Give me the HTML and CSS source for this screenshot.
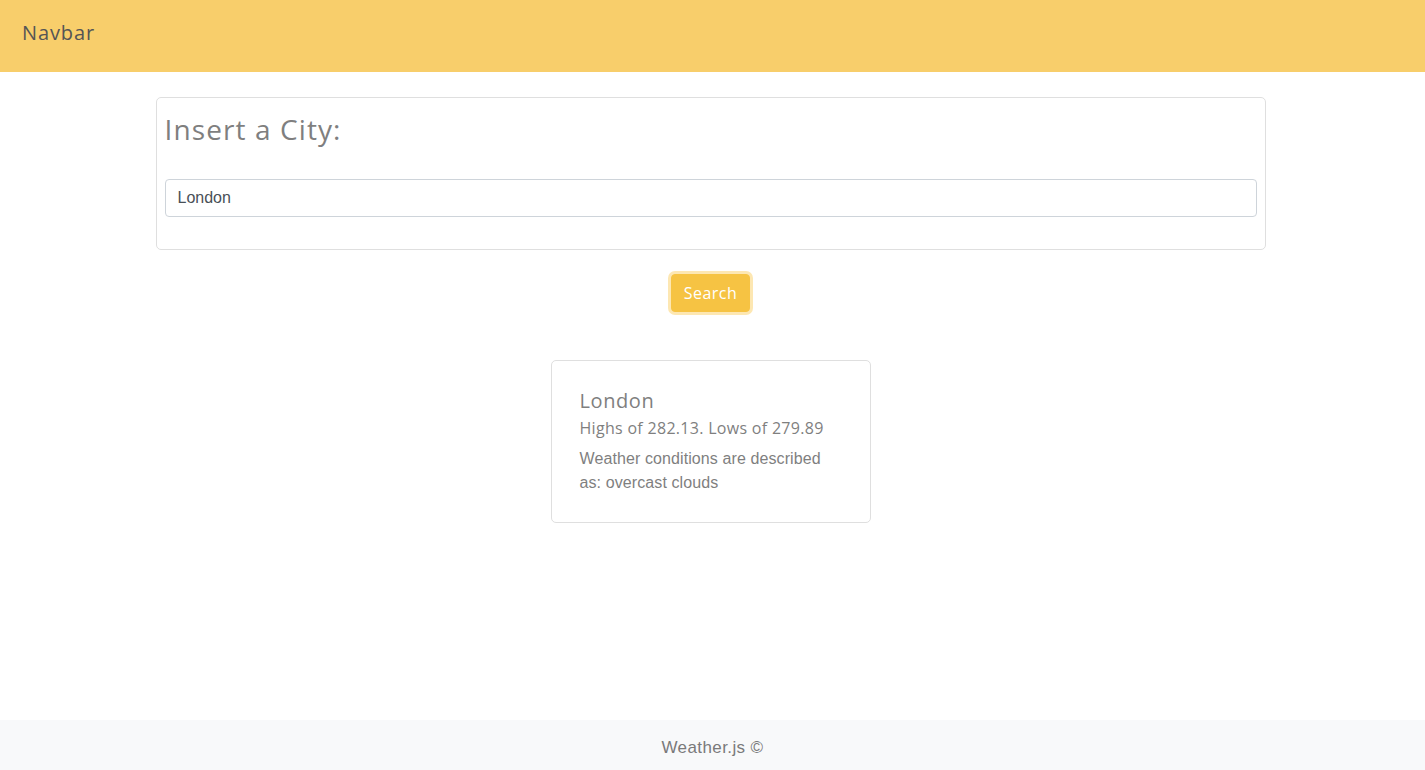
FILE: index.html
```html
<!DOCTYPE html>
<html lang="en">
<head>
<meta charset="utf-8">
<title>Weather.js</title>
<link rel="stylesheet" href="styles.css">
</head>
<body>
<nav class="navbar"><span class="brand">Navbar</span></nav>
<main class="container">
  <section class="search-card">
    <h1 class="search-title">Insert a City:</h1>
    <input class="city-input" type="text" value="London">
  </section>
  <div class="button-row"><button class="search-btn">Search</button></div>
  <div class="result-row">
    <article class="result-card">
      <h2 class="result-city">London</h2>
      <h3 class="result-temp">Highs of 282.13. Lows of 279.89</h3>
      <p class="result-desc">Weather conditions are described as: overcast clouds</p>
    </article>
  </div>
</main>
<footer class="footer">Weather.js ©</footer>
</body>
</html>
```
FILE: styles.css
```css
* { box-sizing: border-box; }
html, body { height: 100%; }
body {
  margin: 0;
  font-family: "Liberation Sans", Arial, sans-serif;
  font-size: 16px;
  line-height: 1.5;
  color: #212529;
  background: #fff;
  display: flex;
  flex-direction: column;
}
.navbar {
  height: 72px;
  background: #f8ce6b;
  display: flex;
  align-items: flex-start;
  padding: 18px 22px 0;
  flex-shrink: 0;
}
.brand {
  font-family: "Open Sans", sans-serif;
  font-size: 20px;
  line-height: 30px;
  color: #555;
  letter-spacing: 0.9px;
}
.container {
  width: 1114px;
  margin: 0 auto;
  padding-right: 4px;
  flex: 1;
  padding-top: 25px;
}
.search-card {
  border: 1px solid #dfdfdf;
  border-radius: 5px;
  padding: 8px 8px 32px;
}
.search-title {
  margin: 7px 0 32px;
  font-family: "Open Sans", sans-serif;
  font-weight: 500;
  font-size: 28px;
  line-height: 1.2;
  letter-spacing: 1.1px;
  color: #7f7f7f;
}
.city-input {
  display: block;
  width: 100%;
  height: 38px;
  padding: 6px 12px;
  font-family: "Liberation Sans", Arial, sans-serif;
  font-size: 16px;
  color: #495057;
  border: 1px solid #ced4da;
  border-radius: 4px;
  background: #fff;
}
.button-row {
  display: flex;
  justify-content: center;
  margin-top: 24px;
}
.search-btn {
  font-family: "Open Sans", sans-serif;
  font-size: 16px;
  letter-spacing: 0.5px;
  color: #fff;
  background: #f6c343;
  border: 1px solid #f6c343;
  border-radius: 4px;
  padding: 6px 12px;
  line-height: 24px;
  box-shadow: 0 0 0 3px #fde7b2;
}
.result-row {
  display: flex;
  justify-content: center;
  margin-top: 48px;
}
.result-card {
  width: 320px;
  border: 1px solid #dfdfdf;
  border-radius: 5px;
  padding: 27px 28px 27px;
}
.result-city {
  margin: 0 0 3px;
  font-family: "Open Sans", sans-serif;
  font-weight: 500;
  font-size: 20px;
  line-height: 1.3;
  letter-spacing: 0.6px;
  color: #7f7f7f;
}
.result-temp {
  margin: 0 0 8px;
  font-family: "Open Sans", sans-serif;
  font-weight: 500;
  font-size: 16px;
  line-height: 1.4;
  letter-spacing: 0.3px;
  color: #7f7f7f;
}
.result-desc {
  margin: 0;
  font-size: 16px;
  line-height: 24px;
  letter-spacing: 0.1px;
  color: #7f7f7f;
}
.footer {
  height: 50px;
  background: #f8f9fa;
  display: flex;
  align-items: center;
  justify-content: center;
  padding-top: 6px;
  font-size: 17px;
  letter-spacing: 0.4px;
  color: #7a7a7a;
  flex-shrink: 0;
}
```
